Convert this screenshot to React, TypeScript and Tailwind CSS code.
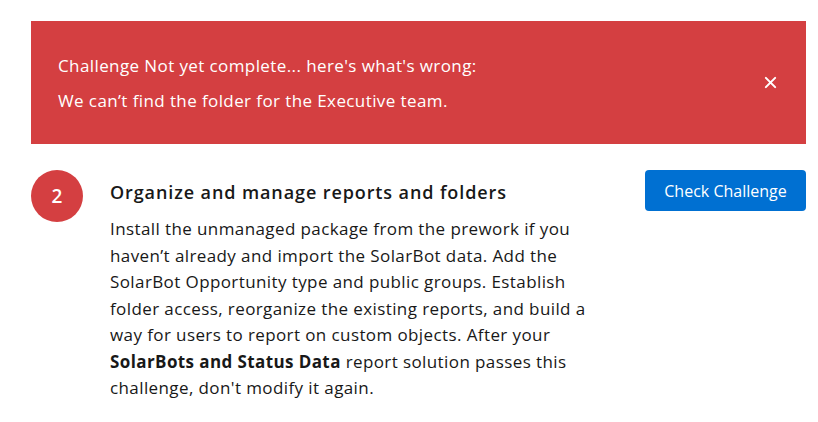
import React from 'react';

const App: React.FC = () => {
    return (
        <div className="w-[818px] h-[422px] bg-white pt-[21px] pl-[31px] pr-[12px] font-['Open_Sans',sans-serif] overflow-hidden">
            <div className="bg-[#d43f41] h-[123px] flex items-center justify-between pl-[27px] pr-[25px] text-white">
                <div className="text-[17px] tracking-[0.4px] leading-[35px]">
                    <p>Challenge Not yet complete... here's what's wrong:</p>
                    <p>We can’t find the folder for the Executive team.</p>
                </div>
                <button className="w-[22px] h-[22px] flex items-center justify-center">
                    <svg viewBox="0 0 14 14" className="w-[13px] h-[13px]" fill="none" stroke="white" strokeWidth="2.2" strokeLinecap="round">
                        <path d="M2 2 L12 12 M12 2 L2 12" />
                    </svg>
                </button>
            </div>

            <div className="flex mt-[26px]">
                <div className="w-[52px] h-[52px] rounded-full bg-[#d43f41] text-white flex items-center justify-center text-[19px] font-semibold shrink-0">
                    2
                </div>
                <div className="ml-[27px] w-[500px] text-[#181818]">
                    <h2 className="text-[18px] tracking-[0.9px] font-semibold leading-[24px] mt-[10px]">Organize and manage reports and folders</h2>
                    <p className="text-[17px] tracking-[0.4px] leading-[26.5px] mt-[12px]">
                        Install the unmanaged package from the prework if you haven’t already and import the SolarBot data. Add the SolarBot Opportunity type and public groups. Establish folder access, reorganize the existing reports, and build a way for users to report on custom objects. After your <strong className="font-bold">SolarBots and Status Data</strong> report solution passes this challenge, don't modify it again.
                    </p>
                </div>
                <div className="ml-auto">
                    <button className="bg-[#0070d2] text-white text-[16px] w-[161px] h-[41px] rounded-[4px]">Check Challenge</button>
                </div>
            </div>
        </div>
    );
};

export default App;
